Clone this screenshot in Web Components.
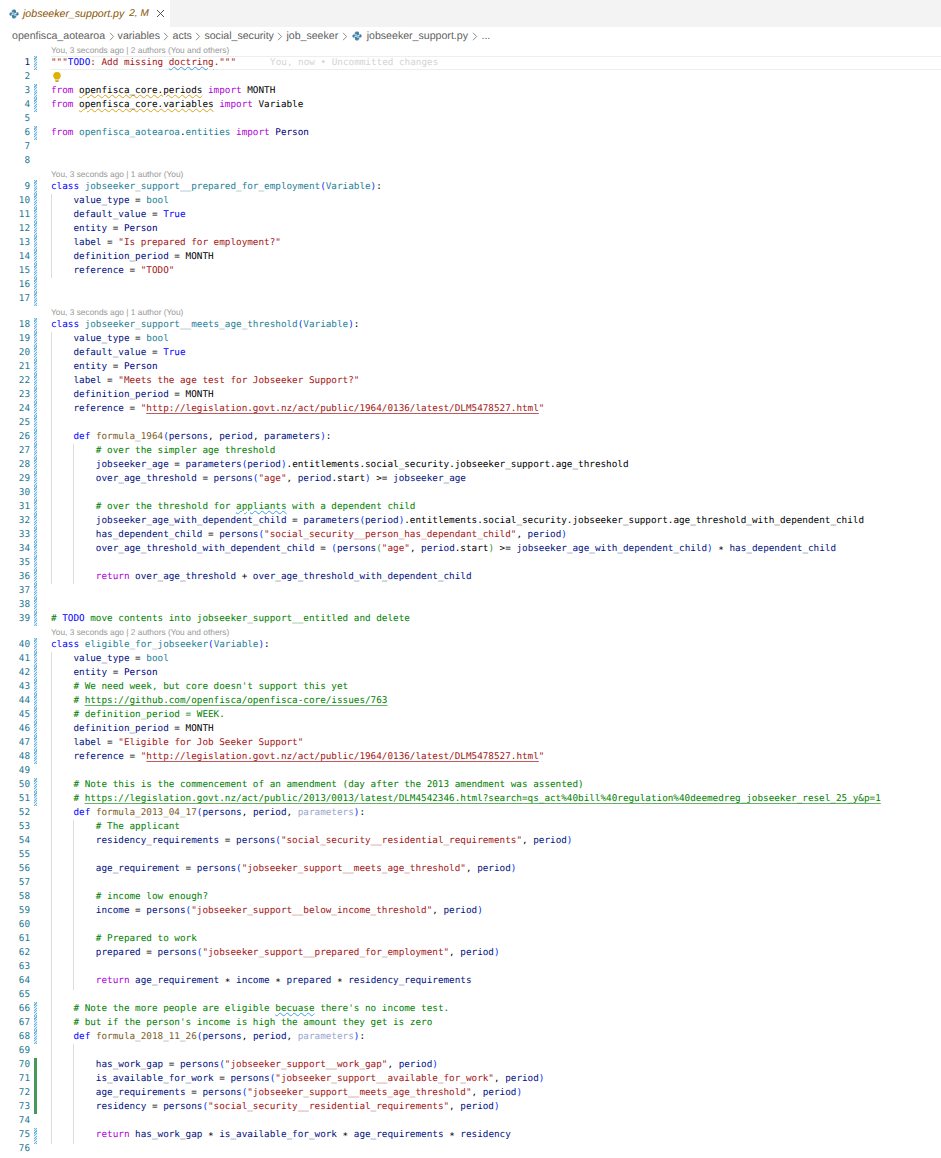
<!DOCTYPE html>
<html>
<head>
<meta charset="utf-8">
<title>jobseeker_support.py</title>
<style>
  html, body { margin: 0; background: #fff; overflow: hidden; }
  body { font-family: "Liberation Sans", Arial, sans-serif; text-rendering: geometricPrecision; }
</style>
</head>
<body>
<editor-window>
  <editor-tab slot="tabs" status="2, M">jobseeker_support.py</editor-tab>
  <bread-crumbs slot="crumbs" path="openfisca_aotearoa/variables/acts/social_security/job_seeker" file="jobseeker_support.py"></bread-crumbs>
  <code-editor slot="code"></code-editor>
</editor-window>

<script>
const PY_ICON = `<svg width="10" height="10" viewBox="0 0 16 16" fill="#3f7fa3" style="display:block;flex:none">
  <path d="M8 .8C5 .8 4.400 2 4.400 3.200v1.600h3.800v.7H2.900C1.500 5.500.6 6.500.6 8.100c0 1.600.9 2.700 2.300 2.700h1.200V9.100c0-1.100.9-2 2-2h3.300c1 0 1.800-.8 1.800-1.800V3.200C11.200 1.800 10.200.8 8 .8zM6.200 2.200a.7.7 0 1 1 0 1.400.7.7 0 0 1 0-1.400z"/>
  <path d="M8 15.200c3 0 3.600-1.200 3.600-2.400v-1.600H7.800v-.7h5.300c1.400 0 2.300-1 2.300-2.600 0-1.600-.9-2.700-2.300-2.700h-1.200v1.700c0 1.100-.9 2-2 2H6.600c-1 0-1.800.8-1.800 1.800v2.100c0 1.400 1 2.400 3.200 2.400zm1.800-1.400a.7.7 0 1 1 0-1.400.7.7 0 0 1 0 1.400z"/>
</svg>`;

class EditorWindow extends HTMLElement {
  constructor() {
    super();
    this.attachShadow({ mode: 'open' });
    this.shadowRoot.innerHTML = `
      <style>
        :host { display: flex; flex-direction: column; width: 941px; height: 1158px; background: #fff; overflow: hidden; }
        .tabs { display: flex; background: #f3f3f3; height: 27px; flex: none; }
      </style>
      <div class="tabs"><slot name="tabs"></slot></div>
      <slot name="crumbs"></slot>
      <slot name="code"></slot>`;
  }
}
customElements.define('editor-window', EditorWindow);

class EditorTab extends HTMLElement {
  constructor() {
    super();
    this.attachShadow({ mode: 'open' });
    this.shadowRoot.innerHTML = `
      <style>
        :host { display: flex; align-items: center; width: 170px; height: 27px; box-sizing: border-box; padding-left: 9px; background: #fff;
                font: italic 10.6px "Liberation Sans", Arial, sans-serif; color: #895503; }
        .label { margin-left: 4px; }
        .status { margin-left: 5px; font-size: 10px; }
        svg.x { margin-left: 7px; }
      </style>
      ${PY_ICON}
      <span class="label"><slot></slot></span>
      <span class="status">${this.getAttribute('status')}</span>
      <svg class="x" width="9" height="9" viewBox="0 0 9 9" stroke="#424242" stroke-width=".9" fill="none"><path d="M1 1l7 7M8 1L1 8"/></svg>`;
  }
}
customElements.define('editor-tab', EditorTab);

class BreadCrumbs extends HTMLElement {
  connectedCallback() {
    if (this.shadowRoot) return;
    this.attachShadow({ mode: 'open' });
    const chev = `<svg width="6" height="9" viewBox="0 0 6 9" fill="none" stroke="#707070" stroke-width=".8" style="margin:0 3px 0 3.500px;flex:none"><path d="M1 .8l3.600 3.700L1 8.200"/></svg>`;
    const parts = this.getAttribute('path').split('/').map(p => `<span>${p}</span>${chev}`).join('');
    this.shadowRoot.innerHTML = `
      <style>
        :host { display: flex; align-items: center; height: 17px; flex: none; padding: 1px 0 0 12px; box-sizing: border-box; white-space: nowrap;
                font: 10.600px "Liberation Sans", Arial, sans-serif; color: #616161; }
        .file { margin: 0 1px 0 2px; }
        svg { margin-left: 1px; }
      </style>
      ${parts}${PY_ICON}<span class="file">&nbsp;${this.getAttribute('file')}</span>${chev}<span>...</span>`;
  }
}
customElements.define('bread-crumbs', BreadCrumbs);

class CodeLens extends HTMLElement {
  constructor() {
    super();
    this.attachShadow({ mode: 'open' });
    this.shadowRoot.innerHTML = `
      <style>
        :host { display: block; height: 12px; line-height: 12px; padding-left: 51px; white-space: nowrap;
                font: 8.35px/12px "Liberation Sans", Arial, sans-serif; color: #999; }
      </style><slot></slot>`;
  }
}
customElements.define('code-lens', CodeLens);

// tiny python highlighter, only what this file needs
const esc = s => s.replace(/&/g, '&amp;').replace(/</g, '&lt;').replace(/>/g, '&gt;');
const URL_RE = /https?:\/\/[^\s"]+/;
const KEYWORDS = { from: 'k', import: 'k', return: 'k', class: 'b', def: 'b', True: 'b', bool: 't', Variable: 't', MONTH: 'a', Person: 'n' };

function comment(text) {
  let html = esc(text)
    .replace(/TODO/, '<span class="b">TODO</span>')
    .replace(/(appliants|becuase)/, '<span class="sq-b">$1</span>')
    .replace(/https?:\/\/\S+/, m => `<span class="url-c">${m}</span>`);
  return `<span class="c">${html}</span>`;
}

function highlight(src) {
  const re = /(#.*$)|("[^"]*")|([A-Za-z_]\w*)|([()])|(\s+)|(.)/g;
  let out = '', prev = '', depth = 0, m;
  while ((m = re.exec(src))) {
    if (m[1]) out += comment(m[1]);
    else if (m[2]) {
      const str = esc(m[2]).replace(URL_RE, u => `<span class="url-s">${u}</span>`);
      out += `<span class="s">${str}</span>`;
    } else if (m[3]) {
      let cls = KEYWORDS[m[3]] || 'v';
      if (prev === 'class') cls = 't';
      if (prev === 'def') cls = 'f';
      if (prev === '.') cls = 'a';
      out += `<span class="${cls}">${m[3]}</span>`;
      prev = m[3];
      continue;
    } else if (m[4]) {
      if (m[4] === '(') depth++;
      out += `<span class="p${depth}">${m[4]}</span>`;
      if (m[4] === ')') depth--;
    } else if (m[5]) { out += m[5]; continue; }
    else if (m[6] === '*') out += '<span class="star">*</span>';
    else out += esc(m[6]);
    prev = m[6] || '';
  }
  return out;
}

class CodeLine extends HTMLElement {
  connectedCallback() {
    if (this.shadowRoot) return;
    this.attachShadow({ mode: 'open' });
    const n = this.getAttribute('n');
    const guides = +this.getAttribute('guides') || 0;
    const diff = this.getAttribute('diff') || '';
    const g = [];
    for (let i = 0; i < guides; i++) g.push(`linear-gradient(#dcdcdc,#dcdcdc) ${i * 22.4}px 0/1px 100% no-repeat`);
    this.shadowRoot.innerHTML = `
      <style>
        :host { display: grid; grid-template-columns: 30px 4px 3px 14px 1fr; height: 14px; white-space: pre;
                font: 9.32px/14px "DejaVu Sans Mono", "Liberation Mono", monospace; color: #000; }
        .num { text-align: right; color: #237893; }
        :host([current]) .num { color: #0b216f; }
        .mod { background: repeating-linear-gradient(-45deg, #6bb6e2 0 .9px, #d6ebf7 .9px 1.800px); }
        .add { background: #48985d; }
        .code { ${g.length ? 'background:' + g.join(',') + ';' : ''} box-sizing: border-box; }
        :host([current]) .code { border: solid #eee; border-width: 1px 0; line-height: 12px; }
        .ghost { color: #d4d4d4; margin-left: 34px; }
        .k { color: #af00db; } .b { color: #0000ff; } .t { color: #267f99; } .f { color: #795e26; }
        .v { color: #001080; } .n { color: #000080; } .a { color: #000; } .s { color: #a31515; } .c { color: #008000; }
        .p1 { color: #0431fa; } .p2 { color: #319331; }
        .fade { color: #9aa6cf; }
        .star { vertical-align: -1.500px; }
        .sq-y { text-decoration: underline wavy #d9a520; text-decoration-thickness: 1px; text-underline-offset: 1px; }
        .sq-b { text-decoration: underline wavy #3f9ce8; text-decoration-thickness: 1px; text-underline-offset: 1px; }
        .url-s { text-decoration: underline rgba(163,21,21,.7); text-underline-offset: 2px; }
        .url-c { text-decoration: underline rgba(0,128,0,.6); text-underline-offset: 2px; }
        .bulb { display: block; margin: 2px 0 0 2px; }
      </style>
      <span class="num">${n}</span><span></span><span class="${diff}"></span><span></span>
      <div class="code">${this.html || ''}</div>`;
  }
}
customElements.define('code-line', CodeLine);

const SOURCE = `"""TODO: Add missing doctring."""

from openfisca_core.periods import MONTH
from openfisca_core.variables import Variable

from openfisca_aotearoa.entities import Person


class jobseeker_support__prepared_for_employment(Variable):
    value_type = bool
    default_value = True
    entity = Person
    label = "Is prepared for employment?"
    definition_period = MONTH
    reference = "TODO"


class jobseeker_support__meets_age_threshold(Variable):
    value_type = bool
    default_value = True
    entity = Person
    label = "Meets the age test for Jobseeker Support?"
    definition_period = MONTH
    reference = "http://legislation.govt.nz/act/public/1964/0136/latest/DLM5478527.html"

    def formula_1964(persons, period, parameters):
        # over the simpler age threshold
        jobseeker_age = parameters(period).entitlements.social_security.jobseeker_support.age_threshold
        over_age_threshold = persons("age", period.start) >= jobseeker_age

        # over the threshold for appliants with a dependent child
        jobseeker_age_with_dependent_child = parameters(period).entitlements.social_security.jobseeker_support.age_threshold_with_dependent_child
        has_dependent_child = persons("social_security__person_has_dependant_child", period)
        over_age_threshold_with_dependent_child = (persons("age", period.start) >= jobseeker_age_with_dependent_child) * has_dependent_child

        return over_age_threshold + over_age_threshold_with_dependent_child


# TODO move contents into jobseeker_support__entitled and delete
class eligible_for_jobseeker(Variable):
    value_type = bool
    entity = Person
    # We need week, but core doesn't support this yet
    # https://github.com/openfisca/openfisca-core/issues/763
    # definition_period = WEEK.
    definition_period = MONTH
    label = "Eligible for Job Seeker Support"
    reference = "http://legislation.govt.nz/act/public/1964/0136/latest/DLM5478527.html"

    # Note this is the commencement of an amendment (day after the 2013 amendment was assented)
    # https://legislation.govt.nz/act/public/2013/0013/latest/DLM4542346.html?search=qs_act%40bill%40regulation%40deemedreg_jobseeker_resel_25_y&p=1
    def formula_2013_04_17(persons, period, parameters):
        # The applicant
        residency_requirements = persons("social_security__residential_requirements", period)

        age_requirement = persons("jobseeker_support__meets_age_threshold", period)

        # income low enough?
        income = persons("jobseeker_support__below_income_threshold", period)

        # Prepared to work
        prepared = persons("jobseeker_support__prepared_for_employment", period)

        return age_requirement * income * prepared * residency_requirements

    # Note the more people are eligible becuase there's no income test.
    # but if the person's income is high the amount they get is zero
    def formula_2018_11_26(persons, period, parameters):

        has_work_gap = persons("jobseeker_support__work_gap", period)
        is_available_for_work = persons("jobseeker_support__available_for_work", period)
        age_requirements = persons("jobseeker_support__meets_age_threshold", period)
        residency = persons("social_security__residential_requirements", period)

        return has_work_gap * is_available_for_work * age_requirements * residency
`.split('\n');

// lines that the highlighter would get wrong (unresolved imports, the inline blame, the bulb)
const RAW = {
  1: `<span class="s">"""</span><span class="b">TODO</span><span class="s">: Add missing <span class="sq-b">doctring</span>."""</span><span class="ghost">You, now • Uncommitted changes</span>`,
  2: `<svg class="bulb" width="8" height="10" viewBox="0 0 8 10"><path fill="#ddb100" d="M4 0a3.800 3.800 0 0 0-3.800 3.800c0 1.300.7 2 1.300 2.700.3.400.5.700.5 1.100h4c0-.4.2-.7.500-1.100.6-.7 1.300-1.400 1.300-2.700A3.800 3.800 0 0 0 4 0z"/><path fill="#c9a227" d="M2.200 8.200h3.600V9c0 .5-.5 1-1 1H3.200c-.5 0-1-.5-1-1z"/></svg>`,
  3: `<span class="k">from</span> <span class="sq-y">openfisca_core.periods</span> <span class="k">import</span> MONTH`,
  4: `<span class="k">from</span> <span class="sq-y">openfisca_core.variables</span> <span class="k">import</span> Variable`,
  6: `<span class="k">from</span> <span class="t">openfisca_aotearoa</span>.<span class="t">entities</span> <span class="k">import</span> <span class="n">Person</span>`
};

const LENS = {
  1: 'You, 3 seconds ago | 2 authors (You and others)',
  9: 'You, 3 seconds ago | 1 author (You)',
  18: 'You, 3 seconds ago | 1 author (You)',
  40: 'You, 3 seconds ago | 2 authors (You and others)'
};

const inRange = (n, ranges) => ranges.some(([a, b]) => n >= a && n <= b);
const MODIFIED = [[1, 1], [3, 4], [6, 6], [9, 39], [40, 48], [50, 51], [66, 68], [75, 75]];
const ADDED = [[70, 73]];
const GUIDE_1 = [[10, 15], [19, 36], [41, 75]];
const GUIDE_2 = [[27, 36], [53, 64], [69, 75]];

class CodeEditor extends HTMLElement {
  constructor() {
    super();
    this.attachShadow({ mode: 'open' });
    this.shadowRoot.innerHTML = `<style>:host { display: block; flex: 1; min-height: 0; }</style><slot></slot>`;
  }

  connectedCallback() {
    SOURCE.forEach((text, i) => {
      const n = i + 1;
      if (LENS[n]) {
        const lens = document.createElement('code-lens');
        lens.textContent = LENS[n];
        this.appendChild(lens);
      }
      const line = document.createElement('code-line');
      line.setAttribute('n', n);
      if (n === 1) line.setAttribute('current', '');
      if (inRange(n, MODIFIED)) line.setAttribute('diff', 'mod');
      if (inRange(n, ADDED)) line.setAttribute('diff', 'add');
      line.setAttribute('guides', inRange(n, GUIDE_2) ? 2 : inRange(n, GUIDE_1) ? 1 : 0);
      let html = RAW[n] || highlight(text);
      if (n === 52 || n === 68) html = html.replace('<span class="v">parameters</span>', '<span class="fade">parameters</span>');
      line.html = html;
      this.appendChild(line);
    });
  }
}
customElements.define('code-editor', CodeEditor);
</script>
</body>
</html>
